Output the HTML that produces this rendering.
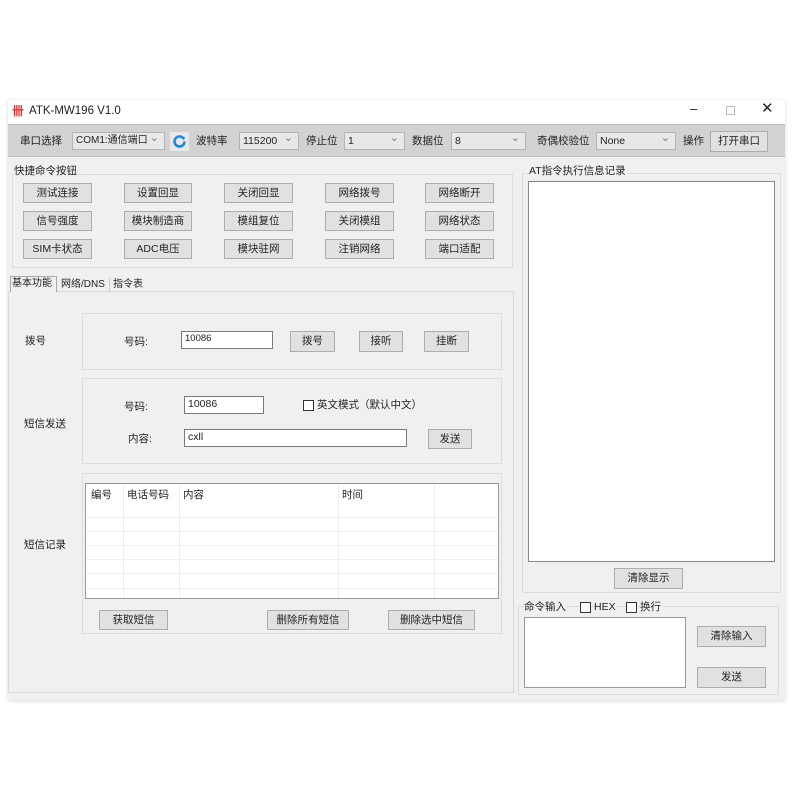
<!DOCTYPE html>
<html><head><meta charset="utf-8"><style>
*{box-sizing:border-box;margin:0;padding:0}
body{width:800px;height:800px;background:#fff;position:relative;overflow:hidden;font-family:"Liberation Sans","Noto Sans CJK SC",sans-serif;font-size:10.5px;color:#222}
.a{position:absolute}
.t{position:absolute;white-space:nowrap;line-height:14px}
.btn{position:absolute;background:#e1e1e1;border:1px solid #adadad;text-align:center;line-height:18px;font-size:10.5px;white-space:nowrap}
.cb{position:absolute;background:#e8e8e8;border:1px solid #b4b4b4;height:18px;line-height:16px;padding-left:3px;font-size:10.5px;white-space:nowrap;overflow:hidden}
.cb:after{content:"⌄";position:absolute;right:5px;top:-3px;color:#777;font-size:11px}
.grp{position:absolute;border:1px solid #dcdcdc}
.in{position:absolute;background:#fff;border:1px solid #7a7a7a;line-height:14px;padding-left:3px;font-size:10.5px}
.chk{position:absolute;width:11px;height:11px;border:1px solid #333;background:#fff}
</style></head><body>
<div class="a" style="left:8px;top:100px;width:777px;height:600px;background:#f0f0f0;box-shadow:0 1px 4px rgba(0,0,0,.15)"></div>
<div class="a" style="left:8px;top:100px;width:777px;height:24px;background:#fff"></div>
<div class="t" style="left:12px;top:104px;color:#d33;font-size:12px;font-weight:bold">卌</div>
<div class="t" style="left:29px;top:104px;font-size:11.5px">ATK-MW196 V1.0</div>
<div class="t" style="left:690px;top:102px;font-size:13px">–</div>
<div class="a" style="left:726px;top:106px;width:9px;height:9px;border:1px solid #bbb"></div>
<div class="t" style="left:761px;top:102px;font-size:15px">✕</div>
<div class="a" style="left:8px;top:124px;width:777px;height:33px;background:#d2d2d2;border-top:1px solid #bdbdbd;border-bottom:1px solid #bdbdbd"></div>
<div class="t" style="left:20px;top:134px">串口选择</div>
<div class="cb" style="left:72px;top:132px;width:93px;font-size:10px">COM1:通信端口</div>
<div class="a" style="left:170px;top:132px;width:19px;height:19px;background:#e8e8e8"></div>
<svg class="a" style="left:172px;top:134px" width="15" height="15" viewBox="0 0 15 15"><path d="M11.5 4.5A5 5 0 1 0 12.5 7.5" fill="none" stroke="#1a8be0" stroke-width="2.6"/><path d="M9 2.5l4 0.5-1 3.5z" fill="#1a8be0"/></svg>
<div class="t" style="left:196px;top:134px">波特率</div>
<div class="cb" style="left:239px;top:132px;width:60px">115200</div>
<div class="t" style="left:306px;top:134px">停止位</div>
<div class="cb" style="left:344px;top:132px;width:61px">1</div>
<div class="t" style="left:412px;top:134px">数据位</div>
<div class="cb" style="left:451px;top:132px;width:75px">8</div>
<div class="t" style="left:537px;top:134px">奇偶校验位</div>
<div class="cb" style="left:596px;top:132px;width:80px">None</div>
<div class="t" style="left:683px;top:134px">操作</div>
<div class="btn" style="left:710px;top:131px;width:58px;height:21px">打开串口</div>

<div class="grp" style="left:12px;top:174px;width:501px;height:94px"></div>
<div class="t" style="left:14px;top:164px;background:#f0f0f0;padding-right:2px">快捷命令按钮</div>
<div class="btn" style="left:23px;top:183px;width:69px;height:20px">测试连接</div>
<div class="btn" style="left:124px;top:183px;width:68px;height:20px">设置回显</div>
<div class="btn" style="left:224px;top:183px;width:69px;height:20px">关闭回显</div>
<div class="btn" style="left:325px;top:183px;width:69px;height:20px">网络拨号</div>
<div class="btn" style="left:425px;top:183px;width:69px;height:20px">网络断开</div>
<div class="btn" style="left:23px;top:211px;width:69px;height:20px">信号强度</div>
<div class="btn" style="left:124px;top:211px;width:68px;height:20px">模块制造商</div>
<div class="btn" style="left:224px;top:211px;width:69px;height:20px">模组复位</div>
<div class="btn" style="left:325px;top:211px;width:69px;height:20px">关闭模组</div>
<div class="btn" style="left:425px;top:211px;width:69px;height:20px">网络状态</div>
<div class="btn" style="left:23px;top:239px;width:69px;height:20px">SIM卡状态</div>
<div class="btn" style="left:124px;top:239px;width:68px;height:20px">ADC电压</div>
<div class="btn" style="left:224px;top:239px;width:69px;height:20px">模块驻网</div>
<div class="btn" style="left:325px;top:239px;width:69px;height:20px">注销网络</div>
<div class="btn" style="left:425px;top:239px;width:69px;height:20px">端口适配</div>

<div class="a" style="left:8px;top:291px;width:506px;height:402px;border:1px solid #d9d9d9;background:#f0f0f0"></div>
<div class="a" style="left:10px;top:276px;width:47px;height:16px;border:1px solid #aaa;border-bottom:none;background:#f0f0f0"></div>
<div class="t" style="left:12px;top:277px;font-size:10px">基本功能</div>
<div class="t" style="left:61px;top:278px;font-size:10px">网络/DNS</div>
<div class="a" style="left:109px;top:278px;width:1px;height:13px;background:#ccc"></div>
<div class="t" style="left:113px;top:278px;font-size:10px">指令表</div>

<div class="grp" style="left:82px;top:313px;width:420px;height:57px"></div>
<div class="t" style="left:25px;top:334px">拨号</div>
<div class="t" style="left:124px;top:335px">号码:</div>
<div class="in" style="left:181px;top:331px;width:92px;height:18px;font-size:9.5px">10086</div>
<div class="btn" style="left:290px;top:331px;width:45px;height:21px">拨号</div>
<div class="btn" style="left:359px;top:331px;width:44px;height:21px">接听</div>
<div class="btn" style="left:424px;top:331px;width:45px;height:21px">挂断</div>

<div class="grp" style="left:82px;top:378px;width:420px;height:86px"></div>
<div class="t" style="left:24px;top:417px">短信发送</div>
<div class="t" style="left:124px;top:400px">号码:</div>
<div class="in" style="left:184px;top:396px;width:80px;height:18px">10086</div>
<div class="chk" style="left:303px;top:400px"></div>
<div class="t" style="left:317px;top:398px">英文模式（默认中文）</div>
<div class="t" style="left:128px;top:432px">内容:</div>
<div class="in" style="left:184px;top:429px;width:223px;height:18px">cxll</div>
<div class="btn" style="left:428px;top:429px;width:44px;height:20px">发送</div>

<div class="grp" style="left:82px;top:473px;width:420px;height:161px"></div>
<div class="t" style="left:24px;top:538px">短信记录</div>
<div class="a" style="left:85px;top:483px;width:414px;height:116px;background:#fff;border:1px solid #999"></div>
<div class="a" style="left:86px;top:517px;width:412px;height:1px;background:#eee"></div>
<div class="a" style="left:86px;top:531px;width:412px;height:1px;background:#eee"></div>
<div class="a" style="left:86px;top:545px;width:412px;height:1px;background:#eee"></div>
<div class="a" style="left:86px;top:559px;width:412px;height:1px;background:#eee"></div>
<div class="a" style="left:86px;top:573px;width:412px;height:1px;background:#eee"></div>
<div class="a" style="left:86px;top:588px;width:412px;height:1px;background:#eee"></div>
<div class="a" style="left:123px;top:484px;width:1px;height:114px;background:#eee"></div>
<div class="a" style="left:179px;top:484px;width:1px;height:114px;background:#eee"></div>
<div class="a" style="left:338px;top:484px;width:1px;height:114px;background:#eee"></div>
<div class="a" style="left:434px;top:484px;width:1px;height:114px;background:#eee"></div>
<div class="t" style="left:91px;top:488px">编号</div>
<div class="t" style="left:127px;top:488px">电话号码</div>
<div class="t" style="left:183px;top:488px">内容</div>
<div class="t" style="left:342px;top:488px">时间</div>
<div class="btn" style="left:99px;top:610px;width:69px;height:20px">获取短信</div>
<div class="btn" style="left:267px;top:610px;width:82px;height:20px">删除所有短信</div>
<div class="btn" style="left:388px;top:610px;width:87px;height:20px">删除选中短信</div>

<div class="grp" style="left:522px;top:173px;width:259px;height:420px"></div>
<div class="t" style="left:529px;top:164px;background:#f0f0f0;padding-right:2px">AT指令执行信息记录</div>
<div class="a" style="left:528px;top:181px;width:247px;height:381px;background:#fff;border:1px solid #888"></div>
<div class="btn" style="left:614px;top:568px;width:69px;height:21px">清除显示</div>

<div class="grp" style="left:518px;top:606px;width:261px;height:89px"></div>
<div class="t" style="left:524px;top:600px;background:#f0f0f0">命令输入</div>
<div class="chk" style="left:580px;top:602px"></div>
<div class="t" style="left:594px;top:600px;background:#f0f0f0">HEX</div>
<div class="chk" style="left:626px;top:602px"></div>
<div class="t" style="left:640px;top:600px;background:#f0f0f0;padding-right:2px">换行</div>
<div class="a" style="left:524px;top:617px;width:162px;height:71px;background:#fff;border:1px solid #999"></div>
<div class="btn" style="left:697px;top:626px;width:69px;height:21px">清除输入</div>
<div class="btn" style="left:697px;top:667px;width:69px;height:21px">发送</div>
</body></html>
